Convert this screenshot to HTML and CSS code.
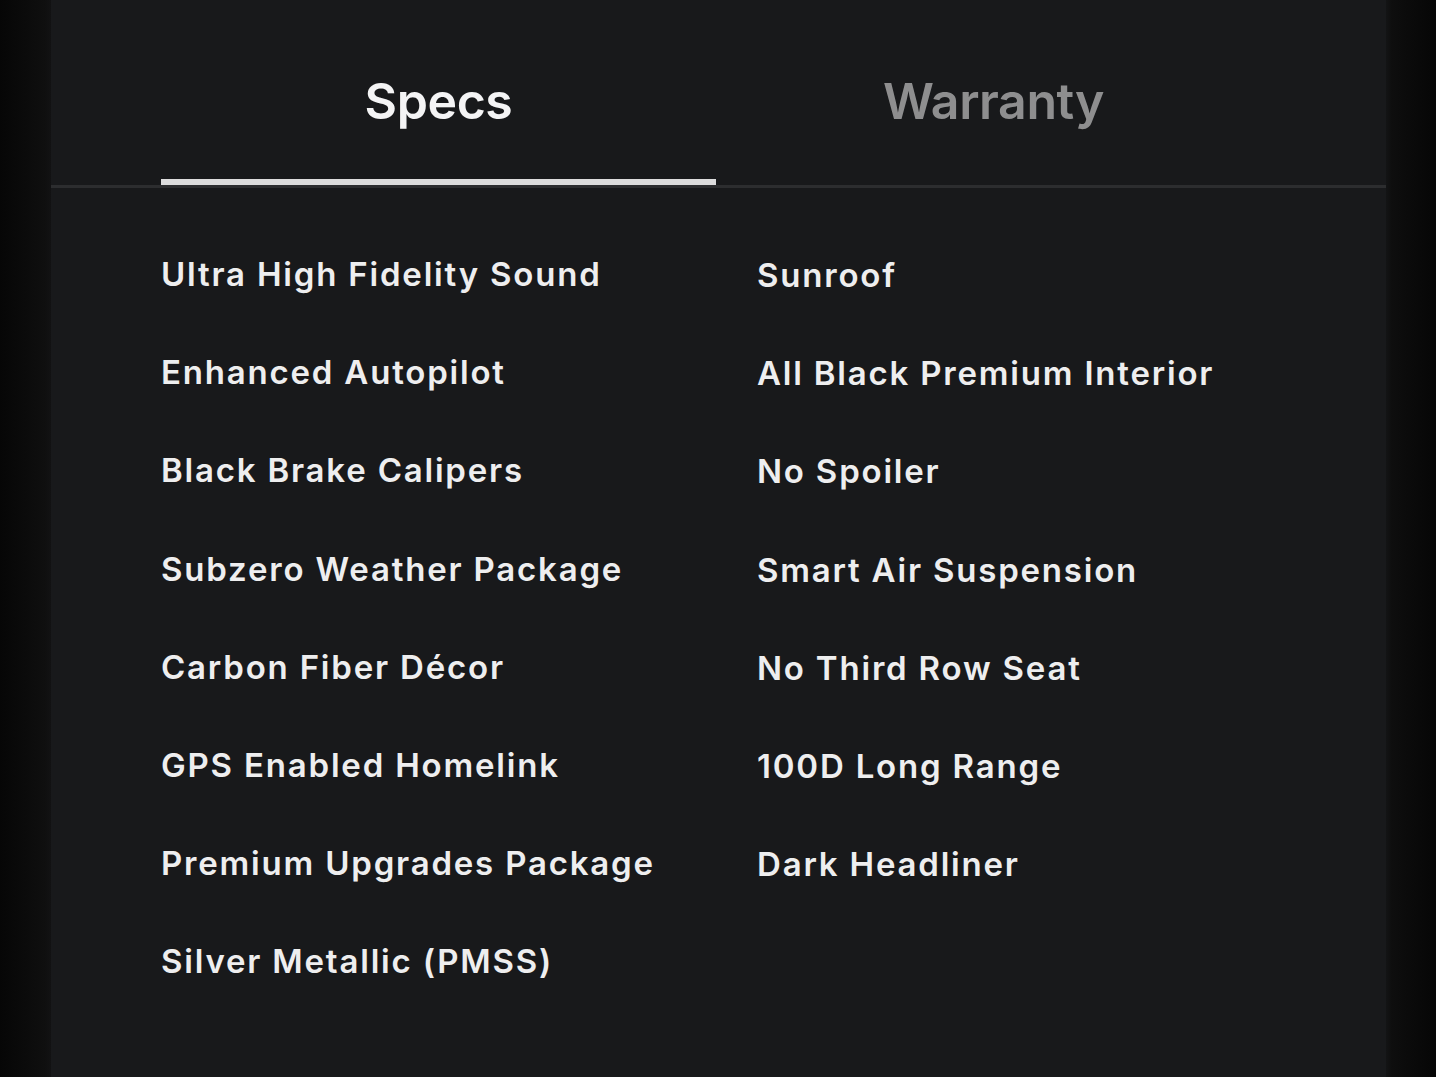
FILE: index.html
```html
<!DOCTYPE html>
<html lang="en">
<head>
<meta charset="utf-8">
<title>Specs</title>
<link rel="stylesheet" href="styles.css">
</head>
<body>
<main class="panel">
  <nav class="tabs">
    <div class="tab tab-active">Specs</div>
    <div class="tab">Warranty</div>
  </nav>
  <section class="specs">
    <ul class="col col-left">
      <li>Ultra High Fidelity Sound</li>
      <li>Enhanced Autopilot</li>
      <li>Black Brake Calipers</li>
      <li>Subzero Weather Package</li>
      <li>Carbon Fiber Décor</li>
      <li>GPS Enabled Homelink</li>
      <li>Premium Upgrades Package</li>
      <li>Silver Metallic (PMSS)</li>
    </ul>
    <ul class="col col-right">
      <li>Sunroof</li>
      <li>All Black Premium Interior</li>
      <li>No Spoiler</li>
      <li>Smart Air Suspension</li>
      <li>No Third Row Seat</li>
      <li>100D Long Range</li>
      <li>Dark Headliner</li>
    </ul>
  </section>
</main>
</body>
</html>
```

FILE: styles.css
```css
html, body {
  margin: 0;
  padding: 0;
  height: 100%;
}
body {
  background: linear-gradient(to right, #060606 0px, #0f0f0f 45px, #121213 51px, #131415 1386px, #0e0e0e 1392px, #060606 1436px);
  font-family: "Inter", "Liberation Sans", sans-serif;
  overflow: hidden;
}
.panel {
  margin: 0 50px 0 51px;
  height: 100%;
  background: #18191b;
  box-sizing: border-box;
}
.tabs {
  display: grid;
  grid-template-columns: 555px 555px;
  padding: 0 110px;
  border-bottom: 3px solid #2c2d2f;
}
.tab {
  padding: 71px 0 48px;
  line-height: 60px;
  font-size: 50px;
  font-weight: 600;
  text-align: center;
  color: #8e8e8f;
  border-bottom: 6px solid transparent;
  letter-spacing: -0.4px;
}
.tab-active {
  color: #f4f4f5;
  border-bottom-color: #dcdcdd;
}
.specs {
  display: grid;
  grid-template-columns: 596px 1fr;
  padding: 66px 110px 0;
}
.col {
  list-style: none;
  margin: 0;
  padding: 0;
  display: flex;
  flex-direction: column;
  gap: 58.2px;
}
.col li {
  font-size: 33px;
  line-height: 40px;
  font-weight: 600;
  color: #eeeeef;
  letter-spacing: 1.8px;
  white-space: nowrap;
}
.col-right {
  padding-top: 1px;
}
```
